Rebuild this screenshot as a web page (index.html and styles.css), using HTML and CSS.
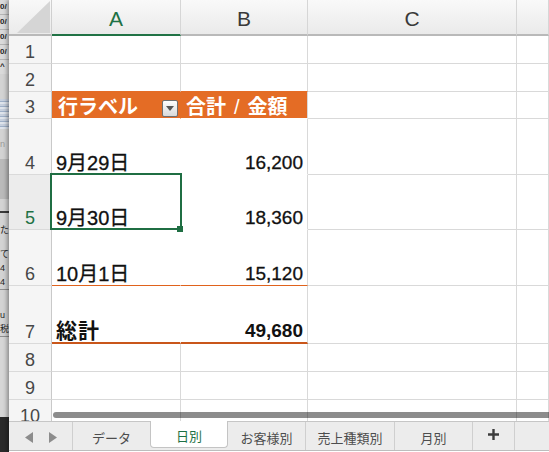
FILE: index.html
```html
<!DOCTYPE html>
<html lang="ja">
<head>
<meta charset="utf-8">
<title>日別</title>
<link rel="stylesheet" href="styles.css">
</head>
<body>
<div class="screen">
  <div class="bgwin">
    <div class="bw-row">0/</div>
    <div class="bw-row">0/</div>
    <div class="bw-row">0/</div>
    <div class="bw-row">0/</div>
    <div class="bw-row bw-caret">^</div>
    <div class="bw-plain bw-h25"></div>
    <div class="bw-thumb"></div>
    <div class="bw-plain bw-faint">n</div>
    <div class="bw-dark"></div>
    <div class="bw-plain bw-h12"></div>
    <div class="bw-rule"></div>
    <div class="bw-txt bw-tall">た</div>
    <div class="bw-txt">て</div>
    <div class="bw-txt">4</div>
    <div class="bw-txt bw-line">4</div>
    <div class="bw-plain bw-h18"></div>
    <div class="bw-txt">u</div>
    <div class="bw-txt bw-line">税</div>
    <div class="bw-plain bw-fill"></div>
    <div class="bw-black"></div>
  </div>

  <div class="app">
    <div class="sheet">
      <div class="grid">
        <div class="corner"><svg width="42" height="34" viewBox="0 0 42 34"><polygon points="8,33 41,1 41,33" fill="#d5d5d5"/></svg></div>
        <div class="ch ch-sel">A</div>
        <div class="ch">B</div>
        <div class="ch">C</div>
        <div class="ch"></div>

        <div class="rh">1</div><div class="c"></div><div class="c"></div><div class="c"></div><div class="c"></div>

        <div class="rh">2</div><div class="c above-pv"></div><div class="c above-pv"></div><div class="c"></div><div class="c"></div>

        <div class="rh">3</div>
        <div class="c pv-h pv-a"><span class="lbl">行ラベル</span><span class="filt"><svg width="8" height="5" viewBox="0 0 8 5"><polygon points="0,0 8,0 4,5" fill="#555"/></svg></span></div>
        <div class="c pv-h pv-b"><span>合計<span class="sep">/</span>金額</span></div>
        <div class="c"></div><div class="c"></div>

        <div class="rh">4</div>
        <div class="c pv pv-a date">9月29日</div>
        <div class="c pv pv-b num">16,200</div>
        <div class="c"></div><div class="c"></div>

        <div class="rh rh-sel">5</div>
        <div class="c pv pv-a date active">9月30日<span class="handle"></span></div>
        <div class="c pv pv-b num">18,360</div>
        <div class="c"></div><div class="c"></div>

        <div class="rh">6</div>
        <div class="c pv pv-a date sub">10月1日</div>
        <div class="c pv pv-b num sub">15,120</div>
        <div class="c"></div><div class="c"></div>

        <div class="rh">7</div>
        <div class="c pv pv-a tot totlbl">総計</div>
        <div class="c pv pv-b num tot">49,680</div>
        <div class="c"></div><div class="c"></div>

        <div class="rh">8</div><div class="c"></div><div class="c"></div><div class="c"></div><div class="c"></div>
        <div class="rh">9</div><div class="c"></div><div class="c"></div><div class="c"></div><div class="c"></div>
        <div class="rh">10</div><div class="c"></div><div class="c"></div><div class="c"></div><div class="c"></div>
      </div>
      <div class="hscroll"></div>
    </div>

    <div class="tabbar">
      <div class="nav">
        <svg class="arr" width="8" height="11" viewBox="0 0 8 11"><polygon points="8,0 8,11 0,5.5" fill="#8c8c8c"/></svg>
        <svg class="arr" width="8" height="11" viewBox="0 0 8 11"><polygon points="0,0 0,11 8,5.5" fill="#8c8c8c"/></svg>
      </div>
      <div class="tab tab-pre">データ</div>
      <div class="tab tab-active">日別</div>
      <div class="tab">お客様別</div>
      <div class="tab tab-wide">売上種類別</div>
      <div class="tab">月別</div>
      <div class="tab tab-add"><svg width="13" height="13" viewBox="0 0 13 13"><path d="M6.5 1v11M1 6.5h11" stroke="#3c3c3c" stroke-width="2.4"/></svg></div>
      <div class="tab-rest"></div>
    </div>
  </div>
</div>
</body>
</html>
```

FILE: styles.css
```css
html, body {
  margin: 0;
  padding: 0;
}
body {
  width: 549px;
  height: 452px;
  overflow: hidden;
  background: #efefef;
  font-family: "Liberation Sans", "Noto Sans CJK JP", sans-serif;
}
.screen {
  display: flex;
  height: 452px;
}

/* background window strip */
.bgwin {
  width: 9px;
  flex: none;
  overflow: hidden;
  background: #d3d3d3;
  display: flex;
  flex-direction: column;
  font-size: 9px;
  color: #222;
  white-space: nowrap;
}
.bw-row {
  height: 14px;
  line-height: 13px;
  border-bottom: 1px solid #b5b5b5;
  background: #dadada;
  font-weight: bold;
  font-size: 8px;
}
.bw-caret { border-bottom: none; }
.bw-h25 { height: 25px; }
.bw-h12 { height: 12px; }
.bw-h18 { height: 18px; }
.bw-thumb {
  height: 30px;
  background: repeating-linear-gradient(#c7d0de 0 2px, #9fb0c8 2px 3px, #dfe4ec 3px 5px);
}
.bw-faint {
  height: 30px;
  line-height: 30px;
  color: #9a9a9a;
}
.bw-dark {
  height: 40px;
  background: #bababa;
}
.bw-rule {
  height: 2px;
  background: #3a3a3a;
}
.bw-txt {
  height: 14px;
  line-height: 14px;
  font-size: 9px;
  color: #1e1e1e;
}
.bw-tall { height: 34px; line-height: 34px; }
.bw-line { border-bottom: 1px solid #8e8e8e; }
.bw-fill { flex: 1; background: #d6d6d6; }
.bw-black {
  height: 35px;
  flex: none;
  background: #2a2a2a;
}

/* app window */
.app {
  flex: 1;
  min-width: 0;
  display: flex;
  flex-direction: column;
  background: #fff;
  box-shadow: -2px 0 4px rgba(0, 0, 0, 0.35);
  position: relative;
}
.sheet {
  height: 421px;
  flex: none;
  overflow: hidden;
  position: relative;
  background: #fff;
}
.grid {
  display: grid;
  grid-template-columns: 43px 129px 127px 209px 1fr;
  grid-template-rows: 36px 28px 28px 27px 56px 55px 56px 58px 28px 28px 28px;
}
.grid > div {
  box-sizing: border-box;
  min-width: 0;
}

/* headers */
.corner {
  background: linear-gradient(#f8f8f8, #ebebeb);
  border-right: 1px solid #cfcfcf;
  border-bottom: 2px solid #b9b9b9;
  overflow: hidden;
}
.corner svg { display: block; }
.ch {
  display: flex;
  align-items: center;
  justify-content: center;
  padding-top: 3px;
  font-size: 21px;
  color: #3a3a3a;
  background: linear-gradient(#f9f9f9, #eaeaea);
  border-right: 1px solid #d6d6d6;
  border-bottom: 2px solid #b9b9b9;
}
.ch-sel {
  color: #1e7145;
  border-bottom-color: #217346;
}
.rh {
  display: flex;
  align-items: flex-end;
  justify-content: center;
  font-size: 18px;
  line-height: 22px;
  color: #474747;
  background: #f5f5f5;
  border-right: 1px solid #c9c9c9;
  border-bottom: 1px solid #dadada;
}
.rh-sel {
  color: #1e7145;
  background: #ececec;
}

/* cells */
.c {
  display: flex;
  align-items: flex-end;
  font-size: 19px;
  line-height: 22px;
  color: #111;
  white-space: nowrap;
  background: #fff;
  border-right: 1px solid #d9d9d9;
  border-bottom: 1px solid #d9d9d9;
}
.above-pv { border-bottom-color: #e46c25; }

.pv-h {
  background: #e46c25;
  color: #fff;
  font-weight: bold;
  font-size: 20px;
  border-bottom-color: #fff;
}
.pv-h.pv-a {
  border-right-color: #e46c25;
  padding-left: 6px;
}
.pv-h.pv-b {
  padding-left: 5px;
}
.sep {
  display: inline-block;
  padding: 0 8px 0 8px;
  font-weight: normal;
}
.lbl { flex: 1; }
.filt {
  width: 16px;
  height: 17px;
  box-sizing: border-box;
  margin: 0 2px 1px 0;
  border: 1px solid #6f6f6f;
  border-radius: 2px;
  background: linear-gradient(#fdfdfd, #d9d9d9);
  display: flex;
  align-items: center;
  justify-content: center;
}
.filt svg { display: block; }

.pv {
  border-bottom-color: #fff;
  -webkit-text-stroke: 0.3px #111;
}
.pv-a {
  border-right-color: #fff;
  padding-left: 4px;
}
.date {
  font-size: 20px;
}
.num {
  justify-content: flex-end;
  padding-right: 4px;
}
.pv.sub { border-bottom: 1px solid #e0621c; }
.pv.tot {
  font-weight: bold;
  border-bottom: 2px solid #c9561a;
  -webkit-text-stroke: 0;
}
.totlbl {
  font-size: 21px;
  letter-spacing: 1px;
}

.active { position: relative; }
.active::after {
  content: "";
  position: absolute;
  top: -2px;
  left: -2px;
  right: -2px;
  bottom: -1px;
  border: 2px solid #1f6e43;
  pointer-events: none;
}
.handle {
  position: absolute;
  right: -3px;
  bottom: -3px;
  width: 6px;
  height: 6px;
  background: #1f6e43;
  z-index: 2;
}

.hscroll {
  position: absolute;
  left: 44px;
  right: 0;
  top: 412px;
  height: 6px;
  border-radius: 3px 0 0 3px;
  background: rgba(0, 0, 0, 0.45);
}

/* sheet tabs */
.tabbar {
  flex: none;
  height: 30px;
  box-sizing: border-box;
  display: flex;
  background: #ececec;
  border-top: 1px solid #c6c6c6;
  border-bottom: 1px solid #bdbdbd;
}
.nav {
  width: 64px;
  flex: none;
  box-sizing: border-box;
  display: flex;
  align-items: center;
  padding: 3px 0 0 16px;
  gap: 16px;
  border-right: 1px solid #cfcfcf;
}
.arr { display: block; }
.tab {
  width: 78px;
  flex: none;
  box-sizing: border-box;
  display: flex;
  align-items: center;
  justify-content: center;
  padding-top: 2px;
  font-size: 13px;
  color: #4d4d4d;
  border-right: 1px solid #cfcfcf;
}
.tab-pre {
  width: 77px;
  border-right: none;
}
.tab-active {
  width: 78px;
  height: 27px;
  margin-top: -1px;
  padding-top: 3px;
  background: #fff;
  color: #1e7145;
  border-left: 1px solid #c4c4c4;
  border-right: 1px solid #c4c4c4;
  border-bottom: 1px solid #c4c4c4;
  border-radius: 0 0 4px 4px;
}
.tab-wide { width: 89px; }
.tab-add {
  width: 42px;
  padding: 0 0 3px 0;
}
.tab-add svg { display: block; }
.tab-rest { flex: 1; }
```
